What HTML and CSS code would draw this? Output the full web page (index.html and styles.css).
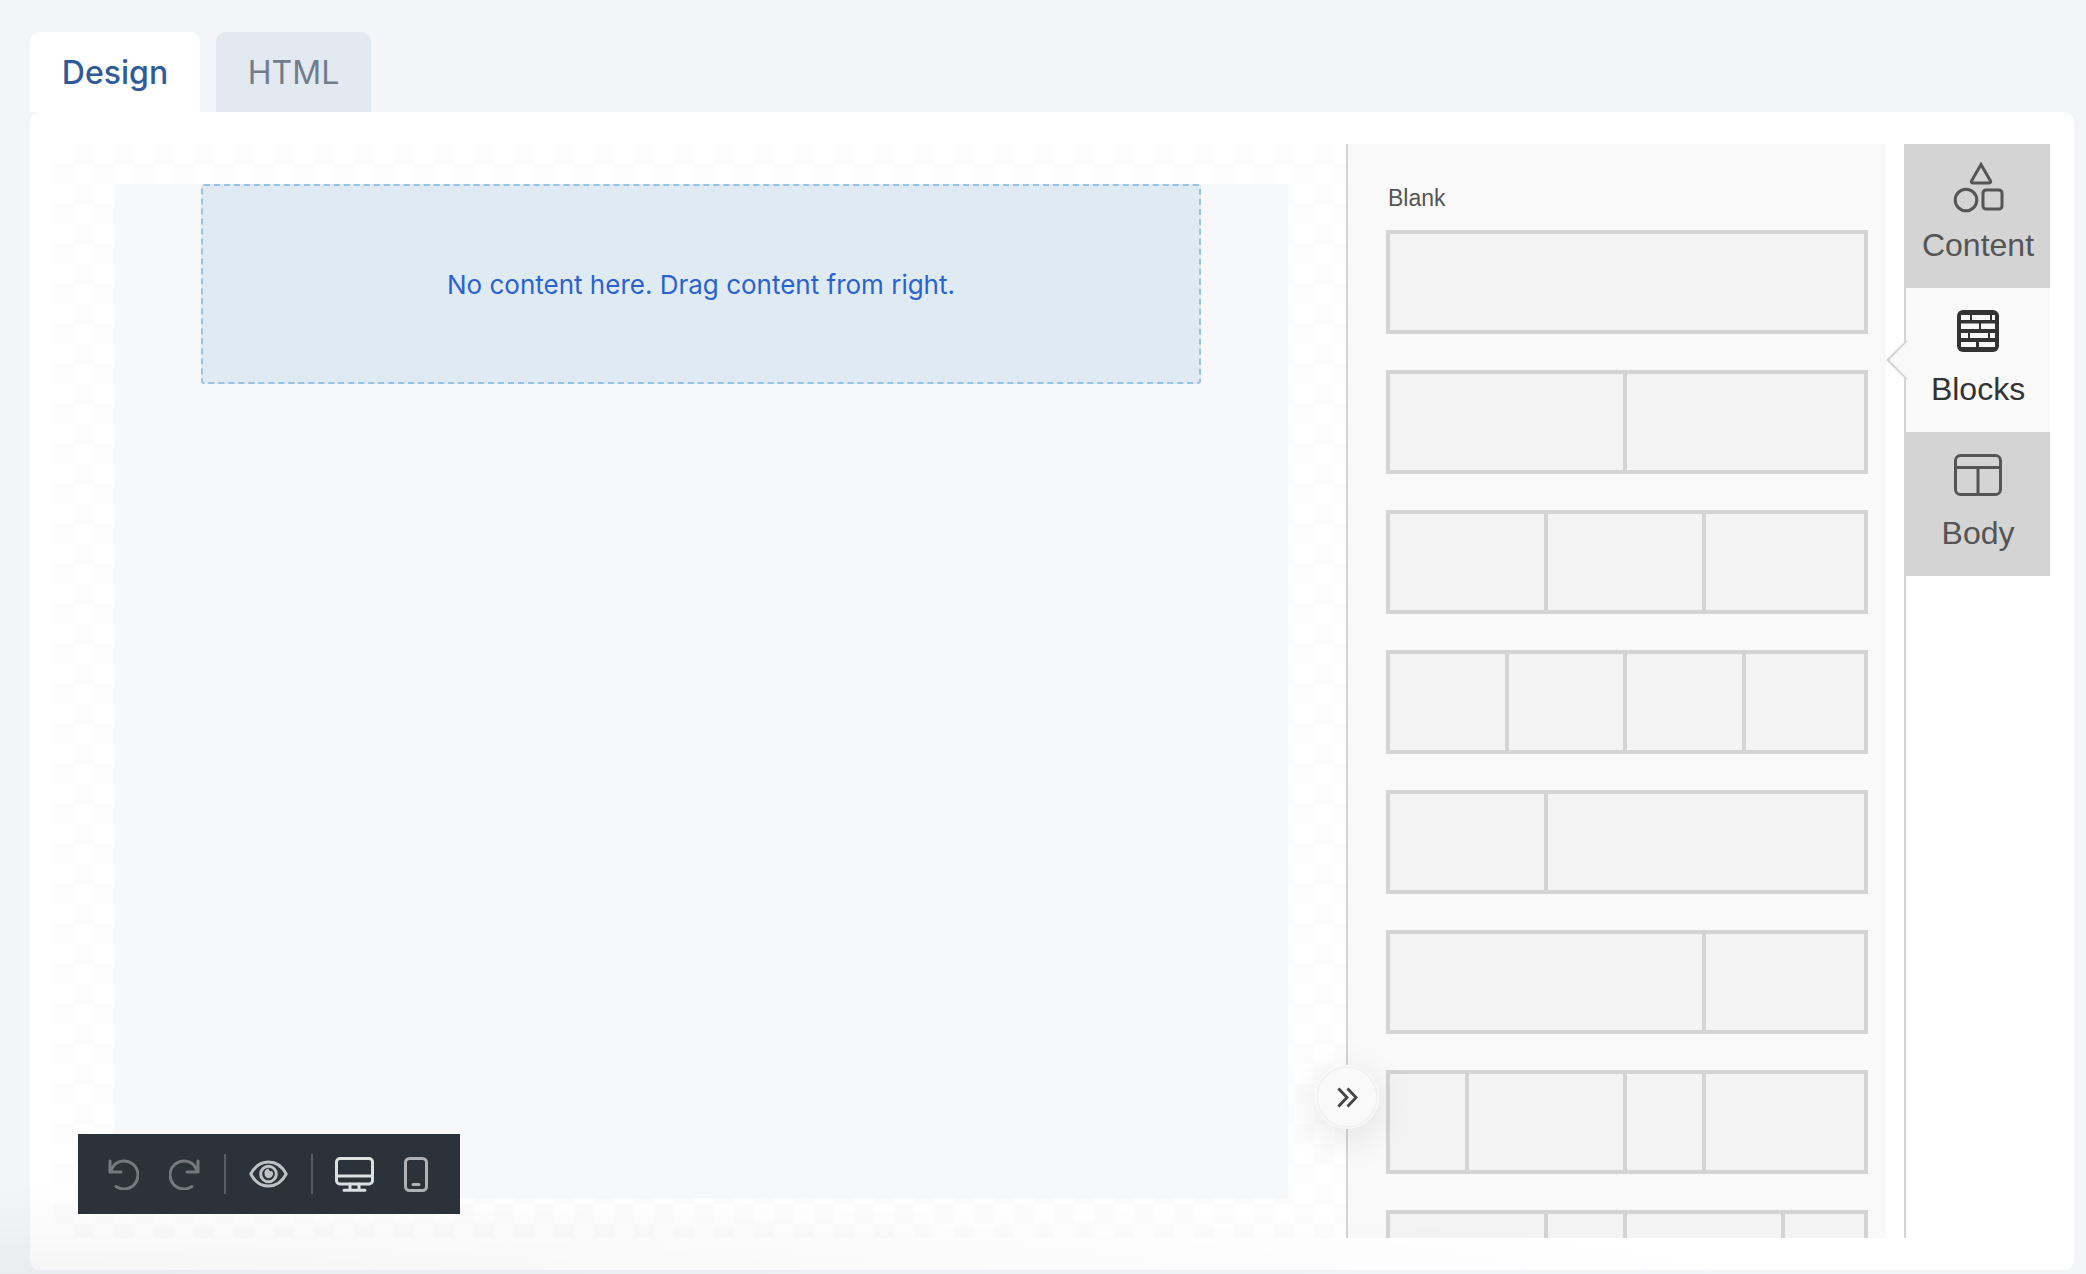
FILE: index.html
```html
<!DOCTYPE html>
<html lang="en">
<head>
<meta charset="utf-8">
<title>Email editor</title>
<link rel="stylesheet" href="styles.css">
</head>
<body>
<div class="tabs">
  <div class="tab tab-active">Design</div>
  <div class="tab tab-idle">HTML</div>
</div>
<main class="card">
  <div class="editor">
    <section class="canvas">
      <div class="sheet">
        <div class="dropzone">No content here. Drag content from right.</div>
      </div>
      <div class="toolbar">
        <div class="tool-pair">
          <svg class="ic-hist" viewBox="0 0 32 32"><path d="M3 3v11h11M3 14l4-6.800A14 14 0 1 1 9 28.500"/></svg>
          <svg class="ic-hist flip" viewBox="0 0 32 32"><path d="M3 3v11h11M3 14l4-6.800A14 14 0 1 1 9 28.500"/></svg>
        </div>
        <span class="sep"></span>
        <svg class="ic-eye" viewBox="0 0 39 30"><path d="M1.800 15C6 7 12 3 19.500 3S33 7 37.200 15C33 23 27 27 19.500 27S6 23 1.800 15Z"/><circle cx="19.500" cy="15" r="7.800"/><path class="eye-dot" d="M15.500 15a4.300 4.300 0 1 0 7.500-3 2.200 2.200 0 0 1-3.200-2.500 4.500 4.500 0 0 0-4.300 5.500Z"/></svg>
        <span class="sep"></span>
        <div class="tool-pair device-pair">
          <svg class="ic-desk" viewBox="0 0 39 35"><rect x="1.500" y="1.500" width="36" height="25.500" rx="3.500"/><path d="M1.500 19h36M15 27v6M24 27v6M9 33.200h21"/></svg>
          <svg class="ic-mob" viewBox="0 0 24 35"><rect x="1.500" y="1.500" width="21" height="32" rx="4"/><path d="M9 27.500h6"/></svg>
        </div>
      </div>
    </section>
    <aside class="panel">
      <div class="collapse">
        <svg viewBox="0 0 22 22"><path d="M1.500 1.500l9 9.500-9 9.500M11 1.500l9 9.500-9 9.500"/></svg>
      </div>
      <div class="panel-scroll">
        <div class="panel-title">Blank</div>
        <div class="layouts">
          <div class="layout"><i class="c6"></i></div>
          <div class="layout"><i class="c3"></i><i class="c3"></i></div>
          <div class="layout"><i class="c2"></i><i class="c2"></i><i class="c2"></i></div>
          <div class="layout layout-4"><i></i><i></i><i></i><i></i></div>
          <div class="layout"><i class="c2"></i><i class="c4"></i></div>
          <div class="layout"><i class="c4"></i><i class="c2"></i></div>
          <div class="layout"><i class="c1"></i><i class="c2"></i><i class="c1"></i><i class="c2"></i></div>
          <div class="layout"><i class="c2"></i><i class="c1"></i><i class="c2"></i><i class="c1"></i></div>
        </div>
      </div>
    </aside>
    <nav class="side">
      <div class="side-tab">
        <div class="side-icon">
          <svg class="ic-content" viewBox="0 0 52 52"><path d="M29 3.500 38.500 20a1.300 1.300 0 0 1-1.100 2H20.600a1.300 1.300 0 0 1-1.100-2Z"/><circle cx="14" cy="39" r="10.800"/><rect x="31" y="29" width="19" height="19" rx="3"/></svg>
        </div>
        <div class="side-label">Content</div>
      </div>
      <div class="side-tab side-tab-active">
        <div class="side-icon">
          <svg class="ic-bricks" viewBox="0 0 42 42"><rect width="42" height="42" rx="6"/><path d="M4 5h9v5H4zM15 5h18v5H15zM35 5h3v5h-3zM4 13.500h18V19H4zM24 13.500h14V19H24zM4 23h7v5H4zM13 23h18v5H13zM33 23h5v5h-5zM4 32h15v5H4zM22 32h16v5H22z"/></svg>
        </div>
        <div class="side-label">Blocks</div>
      </div>
      <div class="side-tab">
        <div class="side-icon">
          <svg class="ic-body" viewBox="0 0 48 42"><rect x="1.500" y="1.500" width="45" height="39" rx="5"/><path d="M1.500 13.500h45M24 13.500v27"/></svg>
        </div>
        <div class="side-label">Body</div>
      </div>
    </nav>
  </div>
</main>
<div class="bottom-shade"></div>
</body>
</html>
```

FILE: styles.css
```css
* { box-sizing: border-box; }

html, body {
  margin: 0;
  height: 1274px;
  overflow: hidden;
}

body {
  position: relative;
  background: #f3f5f9;
  padding: 32px 12px 4px 30px;
  display: flex;
  flex-direction: column;
  font-family: "Inter", "Liberation Sans", sans-serif;
}

/* top tabs */
.tabs {
  display: flex;
  gap: 16px;
  height: 80px;
  flex: none;
}

.tab {
  display: flex;
  align-items: center;
  justify-content: center;
  padding-top: 2px;
  border-radius: 10px 10px 0 0;
  font-size: 32px;
  line-height: 40px;
}

.tab-active {
  width: 170px;
  background: #ffffff;
  color: #305b98;
  font-weight: 500;
}

.tab-idle {
  width: 155px;
  background: #e3e9f1;
  color: #727c8b;
  font-weight: 400;
}

/* main card */
.card {
  flex: 1;
  min-height: 0;
  background: #ffffff;
  border-radius: 10px;
  padding: 32px 24px;
}

.editor {
  display: flex;
  height: 100%;
}

/* canvas */
.canvas {
  position: relative;
  width: 1292px;
  flex: none;
  padding: 40px 58px 40px 60px;
  background-color: #ffffff;
  background-image: conic-gradient(#fcfcfc 25%, #ffffff 0 50%, #fcfcfc 0 75%, #ffffff 0);
  background-size: 40px 40px;
}

.sheet {
  height: 100%;
  background: #f7f8fa;
}

.dropzone {
  width: 1000px;
  height: 200px;
  margin: 0 auto;
  display: flex;
  align-items: center;
  justify-content: center;
  background: #e0eaf3;
  border: 2px dashed #99c3e3;
  border-radius: 3px;
  color: #2a63d0;
  font-size: 26px;
}

/* floating toolbar */
.toolbar {
  position: absolute;
  left: 24px;
  bottom: 24px;
  width: 382px;
  height: 80px;
  padding-left: 29px;
  display: flex;
  align-items: center;
  gap: 23px;
  background: #2b323a;
  z-index: 3;
}

.tool-pair {
  display: flex;
  align-items: center;
  gap: 30px;
}

.device-pair { margin-left: -1px; }

.sep {
  width: 2px;
  height: 40px;
  background: #585e67;
}

.toolbar svg { display: block; fill: none; }

.ic-hist {
  width: 32px;
  height: 32px;
  stroke: #75797f;
  stroke-width: 3;
  stroke-linecap: round;
  stroke-linejoin: round;
}

.flip { transform: scaleX(-1); }

.ic-eye {
  width: 39px;
  height: 30px;
  stroke: #bfc1c4;
  stroke-width: 3;
  stroke-linejoin: round;
}

.toolbar .eye-dot { fill: #bfc1c4; stroke: none; }

.ic-desk {
  width: 39px;
  height: 35px;
  stroke: #dddfe1;
  stroke-width: 3;
  stroke-linecap: round;
}

.ic-mob {
  width: 24px;
  height: 35px;
  stroke: #afb1b4;
  stroke-width: 3;
  stroke-linecap: round;
}

/* blocks panel */
.panel {
  position: relative;
  width: 540px;
  flex: none;
  background: #f9f9f9;
  border-left: 2px solid #d4d4d4;
}

.panel-scroll {
  height: 100%;
  overflow: hidden;
  padding: 40px 18px 0 38px;
}

.panel-title {
  height: 28px;
  margin-bottom: 18px;
  padding-left: 2px;
  color: #555555;
  font-family: "Liberation Sans", Arial, sans-serif;
  font-size: 23px;
  line-height: 28px;
}

.layouts {
  display: flex;
  flex-direction: column;
  gap: 36px;
}

.layout {
  height: 104px;
  flex: none;
  display: grid;
  grid-template-columns: repeat(6, 1fr);
  border: 4px solid #d4d4d4;
}

.layout-4 { grid-template-columns: repeat(4, 1fr); }

.layout i {
  display: block;
  background: #f3f3f3;
  border-right: 4px solid #d4d4d4;
}

.layout i:last-child { border-right: 0; }

.c1 { grid-column: span 1; }
.c2 { grid-column: span 2; }
.c3 { grid-column: span 3; }
.c4 { grid-column: span 4; }
.c6 { grid-column: span 6; }

.collapse {
  position: absolute;
  left: -32px;
  top: 922px;
  width: 62px;
  height: 62px;
  display: flex;
  align-items: center;
  justify-content: center;
  background: #f9f9f9;
  border: 2px solid #f2f2f2;
  border-radius: 50%;
  box-shadow: 0 0 0 1px #fbfbfb, 0 10px 40px rgba(0, 0, 0, 0.11);
  z-index: 2;
}

.collapse svg {
  width: 21px;
  height: 21px;
  fill: none;
  stroke: #444444;
  stroke-width: 3;
}

/* side tabs */
.side {
  width: 146px;
  flex: none;
  margin-left: 18px;
  border-left: 2px solid #d4d4d4;
  font-family: "Liberation Sans", Arial, sans-serif;
}

.side-tab {
  position: relative;
  height: 144px;
  margin-left: -2px;
  padding: 17px 0 0 2px;
  background: #d4d4d4;
  color: #555555;
  text-align: center;
}

.side-tab-active {
  padding-left: 0;
  background: #f9f9f9;
  color: #333333;
  border-left: 2px solid #d4d4d4;
}

.side-tab-active::before {
  content: "";
  position: absolute;
  left: -14px;
  top: 58px;
  width: 26px;
  height: 26px;
  background: #f9f9f9;
  border-left: 2px solid #d4d4d4;
  border-bottom: 2px solid #d4d4d4;
  transform: rotate(45deg);
}

.side-icon {
  position: relative;
  height: 52px;
  display: flex;
  align-items: center;
  justify-content: center;
}

.side-label {
  margin-top: 12px;
  font-size: 32px;
  line-height: 40px;
}

.ic-content {
  width: 52px;
  height: 52px;
  fill: none;
  stroke: #555555;
  stroke-width: 3;
}

.ic-bricks {
  width: 42px;
  height: 42px;
  fill: #f9f9f9;
}

.ic-bricks rect { fill: #333333; }

.ic-body {
  width: 48px;
  height: 42px;
  fill: none;
  stroke: #555555;
  stroke-width: 3;
}

/* soft shadow along the bottom edge */
.bottom-shade {
  position: absolute;
  left: 0;
  bottom: 0;
  width: 1800px;
  height: 90px;
  pointer-events: none;
  background: radial-gradient(ellipse 1800px 90px at 0% 100%, rgba(0, 0, 0, 0.04), rgba(0, 0, 0, 0));
}
```
